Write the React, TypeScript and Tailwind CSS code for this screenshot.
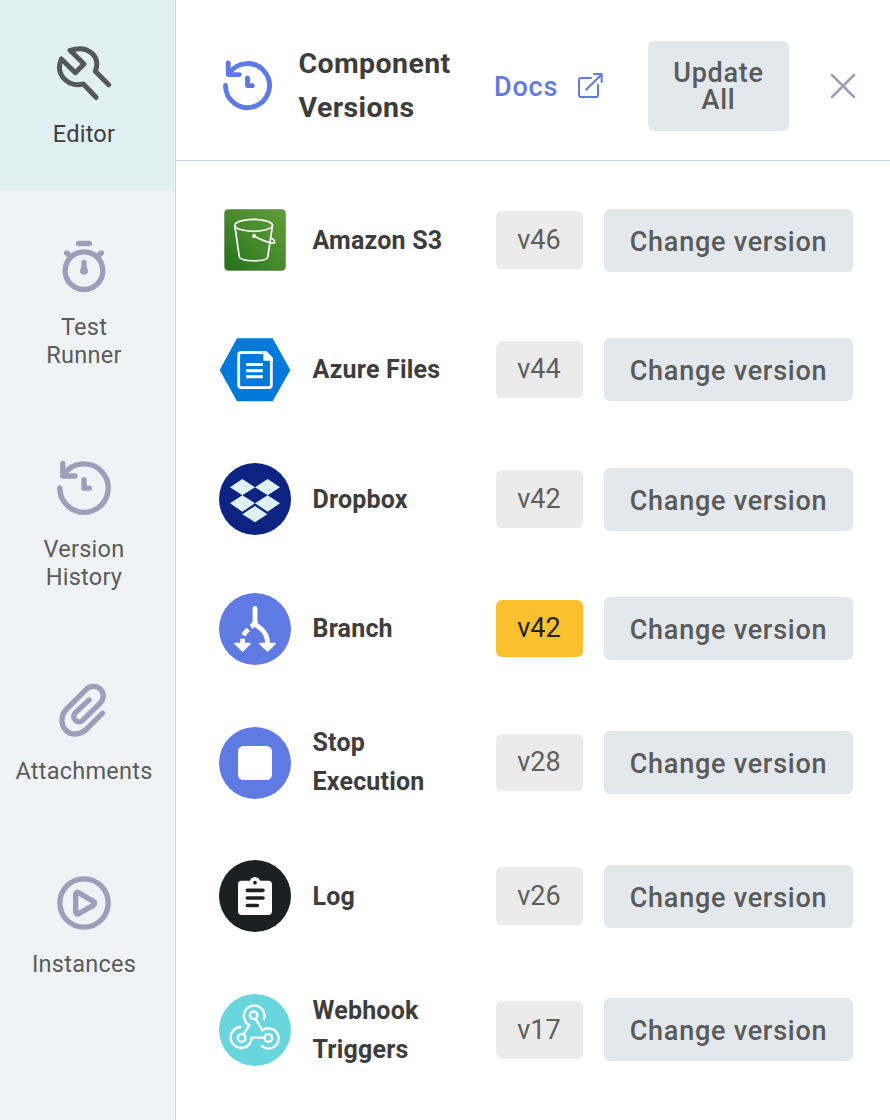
import type { ReactNode } from "react";

function WrenchIcon() {
  return (
    <svg viewBox="168 135 168 168" className="size-14" fill="none" stroke="#55565f" strokeWidth="15" strokeLinecap="round" strokeLinejoin="round">
      <path d="M326 254 L286 214 C302 171 267 133 210 151 L252 192 L226 218 L184 177 C164 225 205 263 250 252 L288 292" />
    </svg>
  );
}

function TimerIcon() {
  return (
    <svg viewBox="168 54 168 168" className="size-14" fill="none" stroke="#9d9fba" strokeWidth="16" strokeLinecap="round">
      <path d="M236 70.5 H268" />
      <circle cx="252" cy="152" r="56.5" />
      <path d="M200 99 L211 109 M304 99 L293 109" />
      <path d="M252 127 V150" />
      <circle cx="252" cy="152" r="12" fill="#9d9fba" stroke="none" />
    </svg>
  );
}

function HistoryIcon({ className }: { className: string }) {
  return (
    <svg viewBox="168 61 168 168" className={className} fill="none" strokeWidth="16" strokeLinecap="round" strokeLinejoin="round">
      <path d="M179.500 145 A72.500 72.500 0 1 0 191 106" />
      <path d="M188.500 71 V109 H225" />
      <path d="M252 120 V145.500 H268" />
    </svg>
  );
}

function ClipIcon() {
  return (
    <svg viewBox="168 64 168 168" className="size-14" fill="none" stroke="#9d9fba" strokeWidth="16" strokeLinecap="round" strokeLinejoin="round">
      <path d="M307 158 L261 204 C242 224 213 225 198 209 C181 192 182 163 200 145 L258 87 C270 74 291 74 302 86 C313 97 312 116 300 128 L250 177 C243 185 232 186 226 179 C219 172 220 162 227 155 L267 118" />
    </svg>
  );
}

function PlayIcon() {
  return (
    <svg viewBox="168 646 168 168" className="size-14" fill="none" stroke="#9d9fba" strokeWidth="16" strokeLinejoin="round">
      <circle cx="252" cy="730" r="72.500" />
      <path d="M227 704 C227 699 231 696 236 699 L280 725 C285 728 285 734 280 737 L236 762 C231 765 227 762 227 757 Z" />
    </svg>
  );
}

function S3Logo() {
  return (
    <svg viewBox="57 42 216 216" className="size-[72px]">
      <defs>
        <linearGradient id="s3" x1="0" y1="1" x2="1" y2="0">
          <stop offset="0" stopColor="#21701a" />
          <stop offset="0.450" stopColor="#43882a" />
          <stop offset="1" stopColor="#619f37" />
        </linearGradient>
      </defs>
      <rect x="73.500" y="58.500" width="183" height="183" rx="11" fill="url(#s3)" stroke="#75886b" strokeWidth="2" />
      <g fill="none" stroke="#fff" strokeWidth="5" strokeLinejoin="round">
        <ellipse cx="161" cy="106" rx="56.500" ry="18" />
        <path d="M104.500 107 L118 201 C120 215 199 217 203 202 L217.500 107" />
        <path d="M162 138 C180 148 196 155 214 159 C230 162 225 150 214 145" />
      </g>
      <circle cx="162" cy="138" r="6" fill="#fff" />
    </svg>
  );
}

function AzureLogo() {
  return (
    <svg viewBox="57 42 216 216" className="size-[72px]">
      <path d="M111 55 H218 L271 150 L218 244 H111 L59 150 Z" fill="#0179db" />
      <path d="M190 97.500 H124 Q116 97.500 116 105.500 V195 Q116 203 124 203 H206 Q214 203 214 195 V116" fill="none" stroke="#fff" strokeWidth="8.500" />
      <path d="M190 93 H199 L219 113 V122 H190 Z" fill="#fff" />
      <path d="M138 133.500 H189 M138 152 H189 M138 170.500 H189" stroke="#fff" strokeWidth="9" />
    </svg>
  );
}

function DropboxLogo() {
  return (
    <svg viewBox="57 429 216 216" className="size-[72px]">
      <circle cx="165" cy="537" r="108" fill="#0c2481" />
      <path
        d="M127 477 L165 501.500 L127 526 L90 501.500 Z M203 477 L240 501.500 L203 526 L165 501.500 Z M127 526 L165 550 L127 575 L90 550 Z M203 526 L240 550 L203 575 L165 550 Z M165 558 L202 582.500 L165 607 L127 582.500 Z"
        fill="#e0f1f5"
      />
    </svg>
  );
}

function BranchLogo() {
  return (
    <svg viewBox="57 39 216 216" className="size-[72px]">
      <circle cx="165" cy="147" r="108" fill="#5f7ae2" />
      <g fill="none" stroke="#fff" strokeWidth="14.500">
        <path d="M165 85 V127" strokeLinecap="round" />
        <path d="M165 126 Q166 135 180 144 Q203 160 203 194" />
        <path d="M166 127 Q164 133 153 140 M145 148 Q135 156 131 166 M128 176 V194" />
      </g>
      <path d="M105 191 H150 L128 213 Z M180 191 H225 L203 213 Z" fill="#fff" stroke="#fff" strokeWidth="5" strokeLinejoin="round" />
    </svg>
  );
}

function StopLogo() {
  return (
    <svg viewBox="57 438 216 216" className="size-[72px] overflow-visible">
      <circle cx="165" cy="549" r="108" fill="#5f7ae2" />
      <rect x="114" y="498" width="102" height="102" rx="16" fill="#fff" />
    </svg>
  );
}

function LogLogo() {
  return (
    <svg viewBox="57 30 216 216" className="size-[72px]">
      <circle cx="165" cy="138" r="108" fill="#1b2121" />
      <rect x="114" y="92" width="102" height="103" rx="11" fill="#fff" />
      <circle cx="165" cy="97" r="16" fill="#fff" />
      <circle cx="165" cy="98" r="5.500" fill="#1b2121" />
      <path d="M142 121 H189 M142 144 H189 M142 166.500 H172" stroke="#1b2121" strokeWidth="11" strokeLinecap="round" />
    </svg>
  );
}

function WebhookLogo() {
  return (
    <svg viewBox="57 432 216 216" className="size-[72px]">
      <circle cx="165" cy="540" r="108" fill="#69d5dc" />
      <g fill="none" stroke="#fff" strokeWidth="7">
        <circle cx="161" cy="496" r="11.500" />
        <circle cx="125" cy="564" r="11.500" />
        <circle cx="205" cy="564" r="11.500" />
        <path d="M191 510 A31 31 0 1 0 148 525 L131 553" />
        <path d="M167 507 L187 541 A30.500 30.500 0 1 1 183 586" />
        <path d="M124 531 A31.500 31.500 0 1 0 155 563 H193" />
      </g>
    </svg>
  );
}

function NavItem({ icon, label, active, tall }: { icon: ReactNode; label: string; active?: boolean; tall?: boolean }) {
  return (
    <a
      className={`mb-[2px] flex flex-col items-center pt-[45px] pr-[6px] ${tall ? "pb-[44px]" : "pb-[43px]"} ${
        active ? "bg-[#e0f0f3] text-[#3f3d3f]" : "text-[#5b5b5b]"
      }`}
    >
      {icon}
      <span className="mt-[19px] w-min text-center text-[23.5px] leading-7 tracking-[0.25px]">{label}</span>
    </a>
  );
}

const components: { name: string; version: string; logo: ReactNode; tall?: boolean; outdated?: boolean }[] = [
  { name: "Amazon S3", version: "v46", logo: <S3Logo /> },
  { name: "Azure Files", version: "v44", logo: <AzureLogo /> },
  { name: "Dropbox", version: "v42", logo: <DropboxLogo /> },
  { name: "Branch", version: "v42", logo: <BranchLogo />, outdated: true },
  { name: "Stop Execution", version: "v28", logo: <StopLogo />, tall: true },
  { name: "Log", version: "v26", logo: <LogLogo /> },
  { name: "Webhook Triggers", version: "v17", logo: <WebhookLogo />, tall: true },
];

export default function App() {
  return (
    <div className="flex h-[1120px] w-[890px] overflow-hidden bg-white font-['Roboto',sans-serif]">
      <nav className="w-44 shrink-0 border-r border-[#cfd5dd] bg-[#eff3f6] pr-px">
        <NavItem active label="Editor" icon={<WrenchIcon />} />
        <NavItem tall label="Test Runner" icon={<TimerIcon />} />
        <NavItem tall label="Version History" icon={<HistoryIcon className="size-14 stroke-[#9d9fba]" />} />
        <NavItem label="Attachments" icon={<ClipIcon />} />
        <NavItem label="Instances" icon={<PlayIcon />} />
      </nav>
      <main className="min-w-0 flex-1">
        <header className="flex h-[161px] items-center border-b border-[#cfd6de] pt-3 pr-[34px] pl-[46px]">
          <HistoryIcon className="mb-[1px] size-[51px] shrink-0 stroke-[#5f7ae2]" />
          <h1 className="ml-[25.5px] w-[195.5px] pr-8 pb-[1px] text-[28.5px] leading-[44px] font-bold tracking-[0.4px] text-[#3d3d3d]">Component Versions</h1>
          <a className="flex w-[154px] items-center pt-[3px] text-[27px] font-medium tracking-[0.8px] text-[#5f7ae2]">
            Docs
            <svg viewBox="326 159 75 75" className="mb-[4px] ml-5 size-[25px]" fill="none" stroke="#5f7ae2" strokeWidth="6" strokeLinejoin="round" strokeLinecap="round">
              <path d="M365 174 H336 Q329 174 329 181 V224 Q329 231 336 231 H379 Q386 231 386 224 V195" />
              <path d="M350 209 L396 164 M374 162 H397 V186" />
            </svg>
          </a>
          <button className="h-[90px] w-[141px] rounded-md bg-[#e3e8ec] px-5 pt-[2px] text-center text-[27px] leading-[27px] font-medium tracking-[0.75px] text-[#5a5a5a]">
            Update All
          </button>
          <svg viewBox="0 0 26 26" className="ml-[41px] size-[26px]" stroke="#9d9fba" strokeWidth="2.500" strokeLinecap="round">
            <path d="M2 2 L24 24 M24 2 L2 24" />
          </svg>
        </header>
        <ul className="pt-[14.25px]">
          {components.map((c) => (
            <li key={c.name} className={c.tall ? "flex h-[138px] items-center pl-[43px]" : "flex h-[129.5px] items-center pl-[43px]"}>
              {c.logo}
              <span className="ml-[21.5px] w-[183.5px] pr-10 text-[25px] leading-[39px] font-bold tracking-[0.2px] text-[#3d3d3d]">{c.name}</span>
              <span
                className={
                  c.outdated
                    ? "flex h-[57.5px] w-[87px] items-center justify-center rounded-md bg-[#fbc02d] pr-px text-[27px] text-[#1d2622]"
                    : "flex h-[57.5px] w-[87px] items-center justify-center rounded-md bg-[#ebebeb] pr-px text-[27px] text-[#5e5e5e]"
                }
              >
                {c.version}
              </span>
              <button className="ml-[21px] h-[63px] w-[249px] rounded-md bg-[#e3e8ec] pt-[3.5px] text-[27px] font-medium tracking-[0.75px] text-[#5a5a5a]">
                Change version
              </button>
            </li>
          ))}
        </ul>
      </main>
    </div>
  );
}
